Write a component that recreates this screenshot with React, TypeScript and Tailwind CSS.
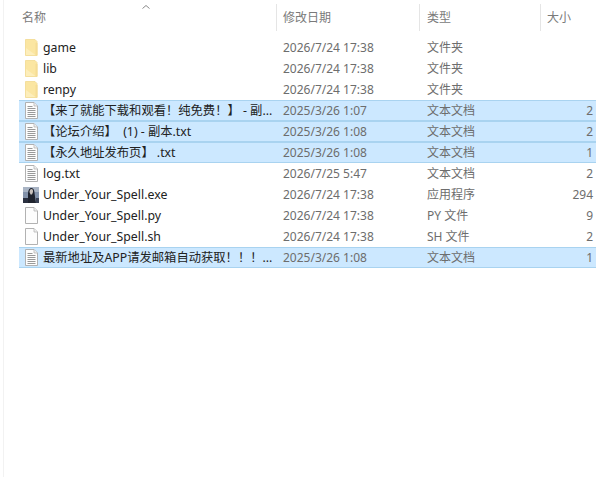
const FONT = "font-['Noto_Sans','Noto_Sans_CJK_SC',sans-serif]";

type Kind = 'folder' | 'text' | 'exe' | 'blank';
type Row = { name: string; date: string; type: string; size: string; kind: Kind; sel?: boolean };

const rows: Row[] = [
  { name: 'game', date: '2026/7/24 17:38', type: '文件夹', size: '', kind: 'folder' },
  { name: 'lib', date: '2026/7/24 17:38', type: '文件夹', size: '', kind: 'folder' },
  { name: 'renpy', date: '2026/7/24 17:38', type: '文件夹', size: '', kind: 'folder' },
  { name: '【来了就能下载和观看！纯免费！】 - 副...', date: '2025/3/26 1:07', type: '文本文档', size: '2', kind: 'text', sel: true },
  { name: '【论坛介绍】\u00a0\u00a0(1) - 副本.txt', date: '2025/3/26 1:08', type: '文本文档', size: '2', kind: 'text', sel: true },
  { name: '【永久地址发布页】 .txt', date: '2025/3/26 1:08', type: '文本文档', size: '1', kind: 'text', sel: true },
  { name: 'log.txt', date: '2026/7/25 5:47', type: '文本文档', size: '2', kind: 'text' },
  { name: 'Under_Your_Spell.exe', date: '2026/7/24 17:38', type: '应用程序', size: '294', kind: 'exe' },
  { name: 'Under_Your_Spell.py', date: '2026/7/24 17:38', type: 'PY 文件', size: '9', kind: 'blank' },
  { name: 'Under_Your_Spell.sh', date: '2026/7/24 17:38', type: 'SH 文件', size: '2', kind: 'blank' },
  { name: '最新地址及APP请发邮箱自动获取！！！...', date: '2025/3/26 1:08', type: '文本文档', size: '1', kind: 'text', sel: true },
];

function Icon({ kind }: { kind: Kind }) {
  if (kind === 'folder') {
    return (
      <svg width="16" height="17" viewBox="0 0 16 17" className="shrink-0">
        <path d="M0.500 0.500h9.500l2 2v14h-11.500z" fill="#fbe6a2" stroke="#f1d98f" strokeWidth="0.8" />
        <path d="M10.500 4h2v12.500h-2z" fill="#f5dc95" />
        <path d="M1 9l9.500 7H1z" fill="#fdeebb" />
      </svg>
    );
  }
  if (kind === 'exe') {
    return (
      <svg width="16" height="16" viewBox="0 0 16 16" className="shrink-0">
        <rect width="16" height="16" fill="#8392aa" />
        <rect width="16" height="5" fill="#a9b4c4" />
        <path d="M5 16V6.500C5 3 6.500 1 8.500 1s3 2.500 3 5l1.500 10z" fill="#20242f" />
        <path d="M6.500 5c0-2 1-3 2-3s1.800 1.200 1.500 3l-1 2.500H7.500z" fill="#c9c2bd" />
        <rect y="11" width="5" height="5" fill="#2b3040" />
        <rect x="13" y="11" width="3" height="5" fill="#3a4256" />
      </svg>
    );
  }
  return (
    <svg width="16" height="17" viewBox="0 0 16 17" className="shrink-0">
      <path d="M0.500 0.500h8.500l3.500 3.500v12.500h-12z" fill="#fdfdfd" stroke="#a9a9a9" strokeWidth="0.9" />
      <path d="M9 0.500v3.500h3.500" fill="#f0f0f0" stroke="#b5b5b5" strokeWidth="0.8" />
      {kind === 'text' && (
        <path d="M2.500 4.500h5M2.500 6.500h8M2.500 8.500h8M2.500 10.500h8M2.500 12.500h8M2.500 14.500h8" stroke="#8d8d8d" strokeWidth="0.9" />
      )}
    </svg>
  );
}

function Header({ label, className }: { label: string; className: string }) {
  return (
    <div className={`flex h-[27px] items-center border-r border-[#e5e5e5] ${className}`}>
      <span>{label}</span>
    </div>
  );
}

export default function App() {
  return (
    <div className={`${FONT} relative h-[477px] w-[596px] overflow-hidden bg-white pl-[3px] text-[12px] text-[#6d6d6d]`}>
      <div className="h-[477px] border-l border-[#f2f2f2] pl-[15px]">
        <div className="flex h-[37px] items-start pt-[4px] text-[#7a7a7a]">
          <Header label="名称" className="w-[258px] pl-[3px]" />
          <Header label="修改日期" className="w-[143px] pl-[6px]" />
          <Header label="类型" className="w-[121px] pl-[7px]" />
          <div className="flex h-[27px] items-center pl-[6px]">大小</div>
        </div>
        <div className="w-[577px]">
          {rows.map((r) => (
            <div
              key={r.name}
              className={`flex h-[21px] items-center border-y ${
                r.sel ? 'border-[#a9d3f0] bg-[#cce8ff]' : 'border-transparent'
              }`}
            >
              <div className="flex w-[258px] items-center">
                <div className={r.kind === 'exe' ? 'pl-[4px]' : 'pl-[6px]'}>
                  <Icon kind={r.kind} />
                </div>
                <span className={`${r.kind === 'exe' ? 'pl-[4px]' : 'pl-[2px]'} whitespace-nowrap pt-[2px] text-[12.3px] text-[#222222]`}>{r.name}</span>
              </div>
              <div className="w-[143px] whitespace-nowrap pl-[6px] text-[#6d6d6d]">{r.date}</div>
              <div className="w-[121px] whitespace-nowrap pl-[7px] text-[#6d6d6d]">{r.type}</div>
              <div className="w-[52px] text-right text-[#6d6d6d]">{r.size}</div>
            </div>
          ))}
        </div>
      </div>
      <svg width="10" height="6" viewBox="0 0 10 6" className="absolute left-[141px] top-[4px]">
        <path d="M1.500 4.500l3.500-3 3.500 3" fill="none" stroke="#8a8a8a" strokeWidth="1" />
      </svg>
    </div>
  );
}
